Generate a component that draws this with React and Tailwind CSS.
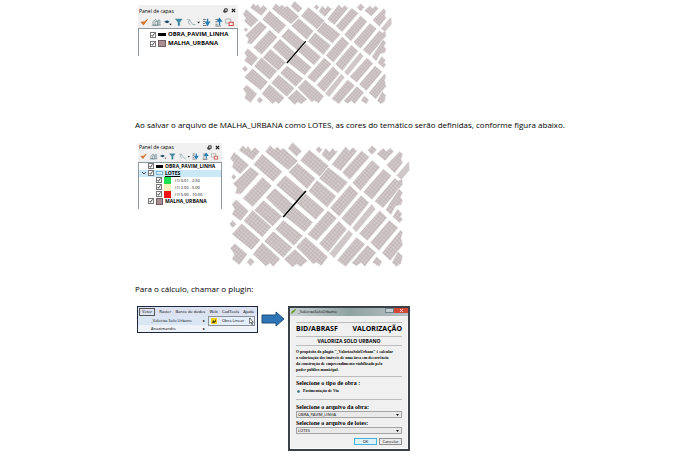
import React, { useId } from 'react';

const BLOCKS = [
  '68,22 78,32 84,24 95,38 105,28 120,42 98,68 56,38',
  '42,42 88,82 60,110 35,88 40,75 30,62',
  '40,108 50,117 42,127 33,118',
  '92,87 119,108 62,170 45,168 50,150 38,138',
  '128,117 156,145 98,208 68,182',
  '127,48 188,102 160,133 100,80',
  '150,22 163,34 172,26 182,36 190,30 235,70 205,98 135,42',
  '218,13 247,40 230,57 203,32',
  '233,75 288,122 262,155 205,103',
  '196,112 255,162 228,193 168,142',
  '165,150 220,200 192,232 137,180',
  '268,35 328,85 300,118 240,68',
  '325,88 385,134 355,168 297,122',
  '292,127 350,175 322,210 265,160',
  '257,167 315,216 288,247 230,197',
  '222,205 280,254 255,284 195,237',
  '130,187 188,236 158,267 102,218',
  '190,247 250,294 222,325 165,275',
  '98,217 155,267 127,300 70,250',
  '160,280 218,330 190,361 132,311',
  '48,185 87,220 62,250 35,230 43,215 35,200',
  '38,247 50,260 38,272 27,259',
  '65,257 122,307 95,338 35,290',
  '127,314 182,364 160,388 150,378 138,387 98,350',
  '45,317 83,350 58,383 35,365 42,350 30,332',
  '92,360 105,372 92,386 80,373',
  '225,334 264,370 242,388 230,380 218,390 192,365',
  '257,297 325,358 305,385 290,375 280,380 228,328',
  '297,25 308,36 298,47 287,36',
  '318,30 329,42 338,30 347,40 358,37 328,72 304,51',
  '378,25 388,38 400,28 410,38 419,32 362,101 335,80',
  '425,38 450,58 390,127 366,104',
  '457,22 472,36 457,52 443,38',
  '490,30 500,40 512,30 523,41 496,70 470,49',
  '540,40 550,50 545,65 550,75 525,107 500,82',
  '457,66 482,88 422,160 397,135',
  '491,93 516,114 457,187 430,163',
  '525,120 535,128 548,122 550,140 490,212 464,191',
  '390,142 417,167 358,237 330,211',
  '424,172 449,195 391,267 364,242',
  '480,218 503,240 443,310 417,288',
  '509,247 536,270 478,340 451,315',
  '538,152 550,165 543,178 550,188 545,202 528,206 514,233 497,216',
  '533,213 548,228 543,237 550,245 540,257 518,237',
  '543,276 550,285 545,300 550,322 512,370 486,346',
  '325,218 352,242 290,311 262,290',
  '357,249 382,275 325,345 297,318',
  '410,298 437,320 378,388 351,368',
  '443,322 470,345 435,388 424,376 410,386 395,376',
  '470,356 488,372 478,388 457,375',
  '535,340 545,352 550,350 545,378 530,388 516,375',
];

const OPEN_BLOCKS = [
  '568,70 570,97 545,127 530,113',
  '456,198 468,214 410,284 397,271',
  '387,277 400,290 343,362 328,348',
];

function CityMap({ className, label }) {
  const id = useId();
  return (
    <svg viewBox="24 10 550 384" className={className} role="img" aria-label={label}>
      <defs>
        <pattern id={id} width="9" height="9" patternUnits="userSpaceOnUse" patternTransform="rotate(41)">
          <rect width="9" height="9" fill="#d3cacc" />
          <path d="M0 1H9M1 0V9" stroke="#b9adb0" strokeWidth="2" />
        </pattern>
      </defs>
      <g fill={`url(#${id})`} stroke="#fff" strokeWidth="2">
        {BLOCKS.map((points) => (
          <polygon key={points} points={points} />
        ))}
      </g>
      <g fill="#d0c7c9" stroke="#fff" strokeWidth="1">
        {OPEN_BLOCKS.map((points) => (
          <polygon key={points} points={points} />
        ))}
      </g>
      <path d="M190 238L258 160" stroke="#000" strokeWidth="5" />
    </svg>
  );
}

function Toolbar() {
  return (
    <svg viewBox="0 0 280 30" className="block w-full" aria-hidden="true">
      <path d="M3 15l7 8 12-16-9 7z" fill="#e87a28" stroke="#c55a11" strokeWidth="2" />
      <g fill="none" stroke="#5f7f86" strokeWidth="2">
        <path d="M38 24V13l8-6 5 5v12zM44 24V13h6M53 24V9h5v15M34 24h26" />
      </g>
      <path d="M70 14q8-8 17 0-8 8-17 0z" fill="#47718a" />
      <circle cx="79" cy="14" r="3" fill="#14354b" />
      <path d="M85 20h8l-4 4z" fill="#222" />
      <path d="M103 6h20l-7 9v10h-5V15z" fill="#3d91a6" stroke="#28697d" />
      <path d="M137 8h8l-4 7 5 8M144 8l10 14h8" fill="none" stroke="#7899a0" strokeWidth="2" />
      <path d="M167 14h8l-4 5z" fill="#222" />
      <path d="M184 7h8M184 13h6M184 19h6M184 25h10" stroke="#777" strokeWidth="3" />
      <path d="M197 5v13M192 15l5 8 5-8z" stroke="#237cb5" strokeWidth="4" fill="#237cb5" />
      <path d="M220 7h9M220 14h6M220 21h6M220 26h16" stroke="#777" strokeWidth="3" />
      <path d="M232 24V11M227 12l5-7 5 7z" stroke="#237cb5" strokeWidth="4" fill="#237cb5" />
      <path d="M250 6h15v12h-15z" fill="#f6f6f6" stroke="#8f8f8f" strokeWidth="2" />
      <path d="M260 15h12v10h-12z" fill="#fff" stroke="#d7433d" strokeWidth="3" />
    </svg>
  );
}

function Swatch({ kind, tall }) {
  const width = tall ? 'w-2' : 'w-[7px]';
  if (kind === 'line') return <span className={`h-[3px] bg-black ${width}`} />;
  if (kind === 'group')
    return <span className={`h-[4px] border border-[#7fb4d2] bg-[#d8eef8] ${width}`} />;
  if (kind === 'green') return <span className={`h-full bg-[#20e050] ${width}`} />;
  if (kind === 'yellow') return <span className={`h-full bg-[#fbf3bd] ${width}`} />;
  if (kind === 'red') return <span className={`h-full bg-[#ee1414] ${width}`} />;
  return <span className={`h-[7px] border border-[#6f5f62] bg-[#a98f94] ${width}`} />;
}

function Layer({ kind, name, tall, nested, open }) {
  const text = nested ? 'pl-[2px] text-[4px]' : tall ? 'text-[6px] font-bold' : 'text-[5px] font-bold';
  return (
    <li className={`flex items-center ${tall ? 'h-[9px]' : 'h-[7px]'} ${open ? 'bg-[#cbe8f6]' : ''}`}>
      <span className={`flex shrink-0 items-center ${nested ? 'w-[17px]' : tall ? 'w-[11px]' : 'w-[9px]'}`}>
        {open && (
          <svg viewBox="0 0 6 4" className="ml-[3px] w-1" aria-hidden="true">
            <path d="M0 0l3 3 3-3" fill="none" stroke="#333" strokeWidth="1.3" />
          </svg>
        )}
      </span>
      <label className="flex h-full items-center gap-[2px] whitespace-nowrap">
        <span className="relative flex size-[6px] shrink-0">
          <input type="checkbox" defaultChecked className="size-full appearance-none border border-[#777] bg-white" />
          <svg viewBox="0 0 6 6" className="pointer-events-none absolute inset-0" aria-hidden="true">
            <path d="M1.5 3l1 1.3 2-3" fill="none" stroke="#222" strokeWidth=".8" />
          </svg>
        </span>
        <Swatch kind={kind} tall={tall} />
        <span
          className={`font-['Open_Sans',sans-serif] leading-[7px] text-black ${text} ${open ? 'underline' : ''}`}
        >
          {name}
        </span>
      </label>
    </li>
  );
}

function LayersPanel({ className, tall, children }) {
  return (
    <section className={`shrink-0 bg-[#f0f0f0] ${className}`}>
      <header className={`flex items-center justify-between pr-[2px] pl-[1px] ${tall ? 'h-[11px]' : 'h-[8px]'}`}>
        <h2 className="font-['Open_Sans',sans-serif] text-[5px] leading-[8px] text-black">Panel de capas</h2>
        <span className="flex gap-[3px]">
          <button type="button" aria-label="Flutuar" className="flex">
            <svg viewBox="0 0 6 6" className="size-[5px]">
              <path d="M2 1h3v3H2zM1 2.5V5h3" fill="none" stroke="#111" />
            </svg>
          </button>
          <button type="button" aria-label="Fechar" className="flex">
            <svg viewBox="0 0 6 6" className="size-[5px]">
              <path d="M1 1l4 4M5 1L1 5" stroke="#111" strokeWidth="1.3" />
            </svg>
          </button>
        </span>
      </header>
      <div className="px-[2px] py-[1px]">
        <Toolbar />
      </div>
      <ul className={`border border-b-0 border-[#8d989f] bg-white ${tall ? 'h-7' : 'h-[47px]'}`}>{children}</ul>
    </section>
  );
}

function MenuWindow() {
  return (
    <nav className="h-[27px] w-[121px] shrink-0 border border-[#1c2740] bg-[#eff2f8] font-['Open_Sans',sans-serif] text-[4px] leading-[8px] whitespace-nowrap text-black">
      <div className="flex h-[9px] items-center justify-between bg-[#dce2ef] pr-[3px] pl-[1px]">
        <button type="button" className="h-[8px] border border-[#555] px-[2px] leading-[6px]">Vetor</button>
        <button type="button">Raster</button>
        <button type="button">Banco de dados</button>
        <button type="button">Web</button>
        <button type="button">CadTools</button>
        <button type="button">Ajuda</button>
      </div>
      <div className="flex">
        <div className="w-[70px]">
          <button type="button" className="flex h-[9px] w-full items-center justify-between bg-[#dbe6f5] pr-[3px] pl-[13px]">
            _Valoriza Solo Urbano <span>▸</span>
          </button>
          <button type="button" className="flex h-[7px] w-full items-center justify-between pr-[3px] pl-[13px]">
            Anaximandre <span>▸</span>
          </button>
        </div>
        <button type="button" className="flex h-[10px] w-[47px] items-center gap-[5px] border border-[#8a8f99] bg-[#e5eefb] pl-[2px]">
          <svg viewBox="0 0 12 12" className="size-[6px] shrink-0" aria-hidden="true">
            <rect width="12" height="12" fill="#f2d21b" />
            <path d="M2 10l2-6 3 3 3-5v5l-4 3z" fill="#4a3c00" />
          </svg>
          Obra Linear
          <svg viewBox="0 0 8 12" className="h-[8px] w-[5px] shrink-0" aria-hidden="true">
            <path d="M1 1v9l2-2 2 4 1-1-2-3h3z" fill="#fff" stroke="#222" />
          </svg>
        </button>
      </div>
    </nav>
  );
}

function FileSelect({ id, label, value }) {
  return (
    <div>
      <label htmlFor={id} className="block text-[6px] leading-[8px]">{label}</label>
      <div className="relative">
        <select
          id={id}
          defaultValue={value}
          className="block h-[7px] w-full appearance-none border border-[#a3a3a3] bg-[#e9e9e9] pl-[1px] font-['Open_Sans',sans-serif] text-[4px] leading-[5px] font-normal"
        >
          <option>{value}</option>
        </select>
        <svg viewBox="0 0 6 4" className="pointer-events-none absolute top-[3px] right-[3px] w-[3px]" aria-hidden="true">
          <path d="M0 0h6L3 4z" fill="#111" />
        </svg>
      </div>
    </div>
  );
}

function PluginDialog() {
  return (
    <section className="w-[122px] shrink-0 border-2 border-[#3c4048] bg-[#f0f0f0] font-['Liberation_Serif',serif] font-bold whitespace-nowrap text-black">
      <header className="flex h-[8px] items-start justify-between bg-gradient-to-r from-[#c9d0d2] via-[#8fa3a3] to-[#b8c0c4]">
        <h2 className="flex items-center gap-[2px] pl-[1px] font-['Open_Sans',sans-serif] text-[4px] leading-[7px] font-normal">
          <svg viewBox="0 0 6 6" className="size-[5px]" aria-hidden="true">
            <path d="M0 6l1-3 4-3 1 1-4 4z" fill="#5b9a1c" />
          </svg>
          _ValorizaSoloUrbano
        </h2>
        <span className="flex">
          <button type="button" aria-label="Ajuda" className="h-[5px] w-[9px] border border-[#71848a] bg-[#c0cdd0]" />
          <button type="button" aria-label="Fechar" className="flex h-[5px] w-[14px] items-center justify-center bg-[#d24a35]">
            <svg viewBox="0 0 4 4" className="size-[3px]">
              <path d="M0 0l4 4M4 0L0 4" stroke="#fff" />
            </svg>
          </button>
        </span>
      </header>
      <form className="border border-t-0 border-[#fafafa] px-[5px] pb-[3px]" onSubmit={(e) => e.preventDefault()}>
        <div className="mt-[6px] flex h-[14px] items-start justify-between border-t border-[#bcbcbc] font-['Open_Sans',sans-serif] text-[7px] leading-[11px]">
          <span>BID/ABRASF</span>
          <span>VALORIZAÇÃO</span>
        </div>
        <h3 className="border-y border-[#bcbcbc] text-center font-['Open_Sans',sans-serif] text-[5px] leading-[8px]">
          VALORIZA SOLO URBANO
        </h3>
        <p className="pt-[3px] text-[4px] leading-[6px]">
          O propósito do plugin "_ValorizaSoloUrbano" é calcular
          <br />a valorização dos imóveis de uma área em decorrência
          <br />da construção de empreendimento viabilizado pelo
          <br />poder público municipal.
        </p>
        <fieldset className="mt-[3px] border-y border-[#bcbcbc] pt-[2px] pb-[4px]">
          <legend className="contents">
            <span className="block text-[6px] leading-[8px]">Selecione o tipo de obra :</span>
          </legend>
          <label className="flex h-[8px] items-center gap-[3px] text-[4px] leading-[6px]">
            <input
              type="radio"
              name="tipo"
              defaultChecked
              className="ml-[1px] size-[3px] appearance-none rounded-full border border-[#54717f] bg-[#2e7ba0]"
            />
            Pavimentação de Via
          </label>
        </fieldset>
        <div className="mt-[3px] flex flex-col gap-[1px]">
          <FileSelect id="obra" label="Selecione o arquivo da obra:" value="OBRA_PAVIM_LINHA" />
          <FileSelect id="lotes" label="Selecione o arquivo de lotes:" value="LOTES" />
        </div>
        <div className="mt-[4px] flex justify-end gap-[2px] font-['Open_Sans',sans-serif] text-[4px] leading-[5px] font-normal">
          <button type="submit" className="h-[7px] w-[23px] border border-[#3fb5dc] bg-[#dff1f7]">OK</button>
          <button type="button" className="h-[7px] w-[23px] border border-[#8f8f8f] bg-[#ebebeb]">Cancelar</button>
        </div>
      </form>
    </section>
  );
}

export default function App() {
  return (
    <main className="min-h-screen bg-white">
      <div className="mx-auto w-[420px]">
        <div className="flex items-start gap-[3px] pl-[3px]">
          <LayersPanel tall className="mt-[5px] w-[100px]">
            <li className="h-[1px]" />
            <Layer tall kind="line" name="OBRA_PAVIM_LINHA" />
            <Layer tall kind="mesh" name="MALHA_URBANA" />
          </LayersPanel>
          <CityMap className="h-[106px] w-[152px]" label="Malha urbana" />
        </div>

        <p className="mt-[11px] font-['Open_Sans',sans-serif] text-[8px] leading-[16px] whitespace-nowrap text-black">
          Ao salvar o arquivo de MALHA_URBANA como LOTES, as cores do temático serão definidas, conforme figura abaixo.
        </p>

        <div className="mt-[8px] flex items-start gap-[6px] pl-[3px]">
          <LayersPanel className="mt-[2px] w-[84px]">
            <Layer kind="line" name="OBRA_PAVIM_LINHA" />
            <Layer kind="group" name="LOTES" open />
            <Layer nested kind="green" name="(1) 0.01 - 2.50" />
            <Layer nested kind="yellow" name="(1) 2.50 - 5.00" />
            <Layer nested kind="red" name="(1) 5.00 - 10.00" />
            <Layer kind="mesh" name="MALHA_URBANA" />
          </LayersPanel>
          <CityMap className="h-[128px] w-[183px]" label="Lotes" />
        </div>

        <p className="mt-[12px] font-['Open_Sans',sans-serif] text-[8px] leading-[16px] text-black">
          Para o cálculo, chamar o plugin:
        </p>

        <div className="mt-[9px] flex items-start gap-[3px] pl-[2px]">
          <MenuWindow />
          <svg viewBox="0 0 24 16" className="mt-[5px] h-4 w-6 shrink-0" aria-hidden="true">
            <path d="M1 4h14V1l8 7-8 7v-3H1z" fill="#2e75b6" stroke="#1f4e79" />
          </svg>
          <PluginDialog />
        </div>
      </div>
    </main>
  );
}
